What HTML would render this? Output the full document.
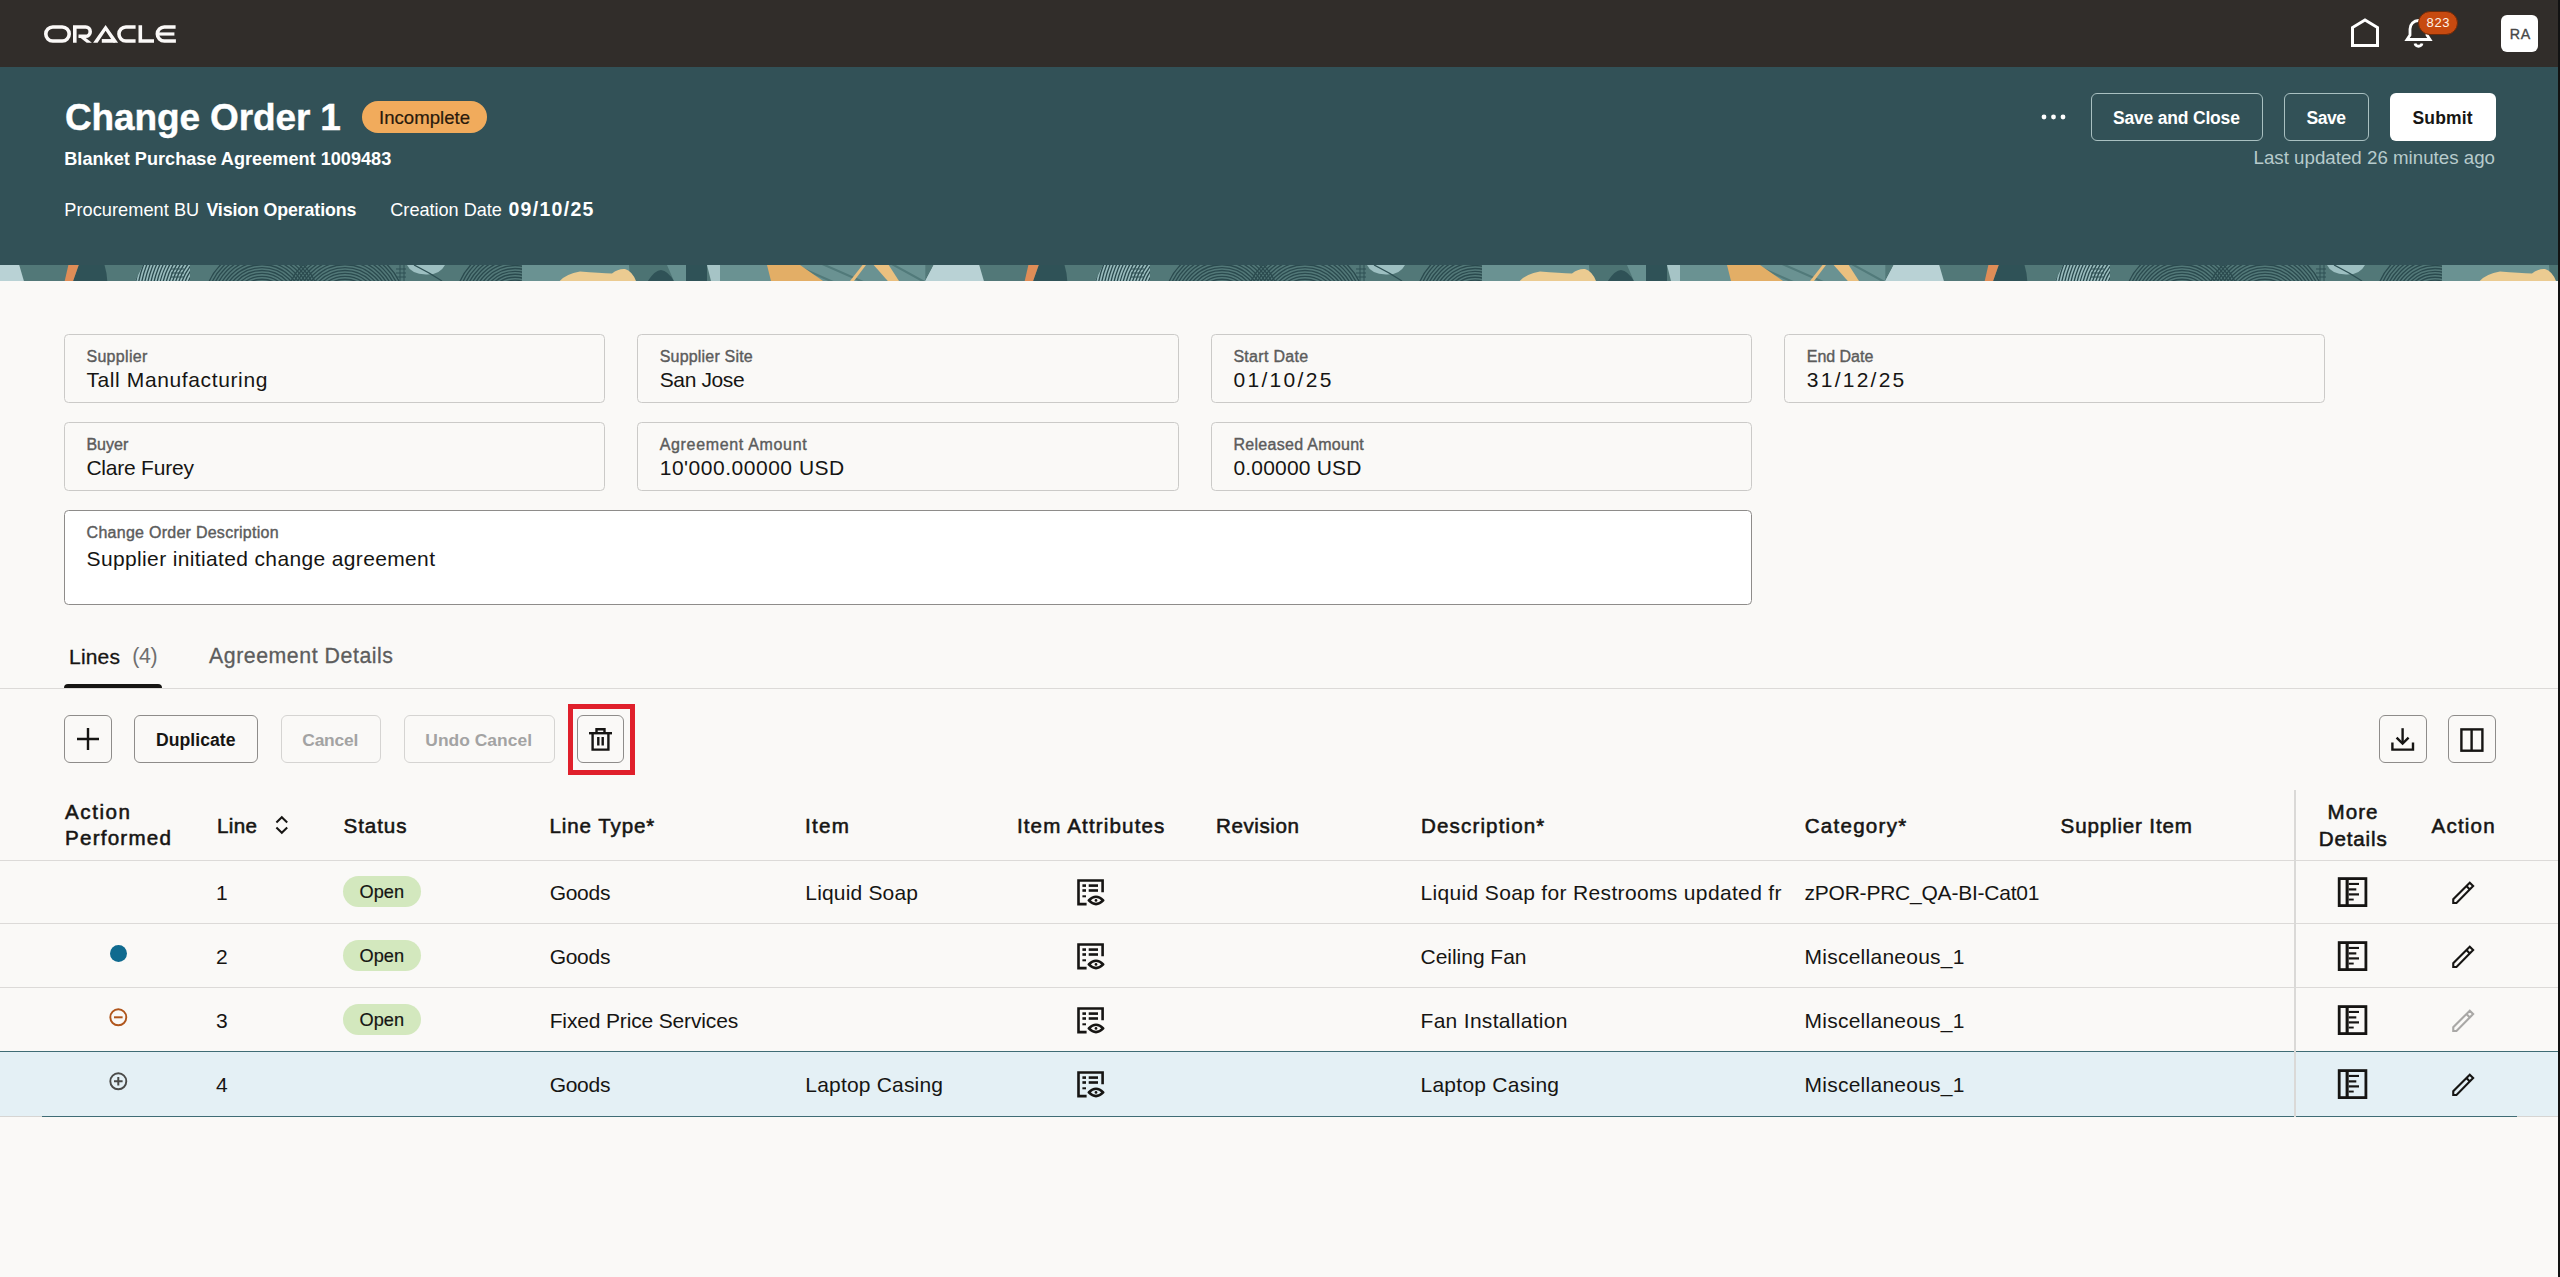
<!DOCTYPE html>
<html><head><meta charset="utf-8"><title>Change Order 1</title>
<style>
html,body{margin:0;padding:0;}
body{width:2560px;height:1277px;overflow:hidden;position:relative;background:#FAF9F7;font-family:"Liberation Sans",sans-serif;}
.t{position:absolute;white-space:nowrap;line-height:0;}
.a{position:absolute;box-sizing:border-box;}
svg{position:absolute;overflow:visible;}

</style></head>
<body>
<!-- top bar -->
<div class="a" style="left:0;top:0;width:2560px;height:67px;background:#312D2A"></div>
<svg style="left:44px;top:25.3px" width="132" height="18" viewBox="0 0 132 17.5">
 <g fill="none" stroke="#FBF9F8" stroke-width="3.6">
  <rect x="1.8" y="1.8" width="23.4" height="13.9" rx="6.95"/>
  <path d="M30.8,17.5 V1.8 H41.6 A4.6,4.6 0 0 1 41.6,11 H34.5"/>
  <polygon points="34.4,11 39.6,11 47.9,17.5 42.7,17.5" fill="#FBF9F8" stroke="none"/>
  <polygon points="49.1,17.5 61.6,-0.3 74.1,17.5 69.6,17.5 61.6,5.6 53.6,17.5" fill="#FBF9F8" stroke="none"/>
  <rect x="57.8" y="13.8" width="13" height="3.7" fill="#FBF9F8" stroke="none"/>
  <path d="M91.6,1.8 H81.9 A6.95,6.95 0 0 0 81.9,15.7 H91.6"/>
  <path d="M96.3,0 V15.7 H110"/>
  <path d="M131.6,1.8 H120.3 A6.95,6.95 0 0 0 120.3,15.7 H131.9"/>
  <path d="M113,8.75 H130.4" stroke-width="3.2"/>
 </g>
</svg>
<!-- home -->
<svg style="left:2350px;top:18px" width="32" height="30" viewBox="0 0 32 30">
 <path d="M2.5,27.5 V9.5 L15,2 L27.5,9.5 V27.5 Z" fill="none" stroke="#fff" stroke-width="3" stroke-linejoin="miter"/>
</svg>
<!-- bell -->
<svg style="left:2404px;top:17px" width="30" height="32" viewBox="0 0 30 32">
 <path d="M3,22.5 H26 L23,18 V12 A8.5,8.5 0 0 0 6,12 V18 Z" fill="none" stroke="#fff" stroke-width="2.8" stroke-linejoin="miter"/>
 <path d="M11,26.5 A3.6,3.6 0 0 0 18,26.5" fill="none" stroke="#fff" stroke-width="2.8"/>
</svg>
<div class="a" style="left:2418px;top:10.8px;width:40px;height:24.7px;border-radius:13px;background:#C74A10;border:1px solid #6b2a0a"></div>
<div class="a" style="left:2501px;top:14.8px;width:37px;height:37.3px;border-radius:6px;background:#fff"></div>

<!-- teal header -->
<div class="a" style="left:0;top:67px;width:2560px;height:198px;background:#325157"></div>
<!-- band -->
<svg style="left:0;top:265px" width="2560" height="16" viewBox="0 0 2560 16">
 <defs>
  <clipPath id="cA"><polygon points="143,0 190,0 190,16 135,16"/></clipPath>
  <clipPath id="cB"><rect x="190" y="0" width="217" height="16"/></clipPath>
  <clipPath id="cC"><rect x="445" y="0" width="78" height="16"/></clipPath>
  <pattern id="band" x="0" y="0" width="960" height="16" patternUnits="userSpaceOnUse">
   <rect x="0" y="0" width="960" height="16" fill="#527878"/>
   <polygon points="-40,0 19.2,0 23.9,16 -40,16" fill="#B9D2D5"/>
   <polygon points="925.3,16 933.7,0 1000,0 1000,16" fill="#B9D2D5"/>
   <path d="M78.7,0 H104.5 Q107,8 107.3,16 H73 Z" fill="#2F5257"/>
   <polygon points="68.4,0 78.7,0 73.1,16 64.7,16" fill="#DF8D57"/>
   <polygon points="143.4,0 190,0 190,16 135,16" fill="#98BBBD"/>
   <g clip-path="url(#cA)"><g fill="none" stroke="#2A4A4E" stroke-width="1.35"><circle cx="235" cy="35" r="50.0"/><circle cx="235" cy="35" r="53.0"/><circle cx="235" cy="35" r="56.0"/><circle cx="235" cy="35" r="59.0"/><circle cx="235" cy="35" r="62.0"/><circle cx="235" cy="35" r="65.0"/><circle cx="235" cy="35" r="68.0"/><circle cx="235" cy="35" r="71.0"/><circle cx="235" cy="35" r="74.0"/><circle cx="235" cy="35" r="77.0"/><circle cx="235" cy="35" r="80.0"/><circle cx="235" cy="35" r="83.0"/><circle cx="235" cy="35" r="86.0"/><circle cx="235" cy="35" r="89.0"/><circle cx="235" cy="35" r="92.0"/><circle cx="235" cy="35" r="95.0"/><circle cx="235" cy="35" r="98.0"/><circle cx="235" cy="35" r="101.0"/><circle cx="235" cy="35" r="104.0"/><circle cx="235" cy="35" r="107.0"/><circle cx="235" cy="35" r="110.0"/></g>
    <g stroke="#2D4F53" stroke-width="1"><path d="M171,4 H184 M171,8 H184 M171,12 H184"/></g></g>
   <g clip-path="url(#cB)"><g fill="none" stroke="#2A4A4E" stroke-width="1.35"><circle cx="262" cy="40" r="20.0"/><circle cx="262" cy="40" r="22.9"/><circle cx="262" cy="40" r="25.8"/><circle cx="262" cy="40" r="28.7"/><circle cx="262" cy="40" r="31.6"/><circle cx="262" cy="40" r="34.5"/><circle cx="262" cy="40" r="37.4"/><circle cx="262" cy="40" r="40.3"/><circle cx="262" cy="40" r="43.2"/><circle cx="262" cy="40" r="46.1"/><circle cx="262" cy="40" r="49.0"/><circle cx="262" cy="40" r="51.9"/><circle cx="262" cy="40" r="54.8"/><circle cx="262" cy="40" r="57.7"/></g><g fill="none" stroke="#2A4A4E" stroke-width="1.35"><circle cx="345" cy="42" r="22.0"/><circle cx="345" cy="42" r="24.9"/><circle cx="345" cy="42" r="27.8"/><circle cx="345" cy="42" r="30.7"/><circle cx="345" cy="42" r="33.6"/><circle cx="345" cy="42" r="36.5"/><circle cx="345" cy="42" r="39.4"/><circle cx="345" cy="42" r="42.3"/><circle cx="345" cy="42" r="45.2"/><circle cx="345" cy="42" r="48.1"/><circle cx="345" cy="42" r="51.0"/><circle cx="345" cy="42" r="53.9"/><circle cx="345" cy="42" r="56.8"/><circle cx="345" cy="42" r="59.7"/></g>
    <g stroke="#2D4F53" stroke-width="1"><path d="M396,4 H406 M396,8 H406 M396,12 H406 M400,0 V16 M404,0 V16"/></g></g>
   <path d="M407,0 H445 Q440,10 426,9.5 Q411,9 407,0 Z" fill="#9DBFC1"/>
   <path d="M414,0 Q430,8 442,16" fill="none" stroke="#2D4F53" stroke-width="1.3"/>
   <g clip-path="url(#cC)"><g fill="none" stroke="#2A4A4E" stroke-width="1.35"><circle cx="515" cy="40" r="22.0"/><circle cx="515" cy="40" r="24.9"/><circle cx="515" cy="40" r="27.8"/><circle cx="515" cy="40" r="30.7"/><circle cx="515" cy="40" r="33.6"/><circle cx="515" cy="40" r="36.5"/><circle cx="515" cy="40" r="39.4"/><circle cx="515" cy="40" r="42.3"/><circle cx="515" cy="40" r="45.2"/><circle cx="515" cy="40" r="48.1"/><circle cx="515" cy="40" r="51.0"/><circle cx="515" cy="40" r="53.9"/><circle cx="515" cy="40" r="56.8"/><circle cx="515" cy="40" r="59.7"/></g></g>
   <rect x="522" y="0" width="108" height="16" fill="#6A9292"/>
   <path d="M629,0 H707 L707,16 H630 Z" fill="#4C7373"/>
   <path d="M559.7,16 Q566,9 580,6.5 Q600,8 612,8.5 Q618,3.5 625,4 Q632,6 636,16 Z" fill="#EBCB91"/>
   <path d="M647.8,16 Q655,5 661,5 Q668,6 674,16 Z" fill="#2F5257"/>
   <polygon points="667,0 686,0 686,16 674,16" fill="#6E9797" opacity="0.8"/>
   <rect x="686" y="0" width="21" height="16" fill="#2F5257"/>
   <polygon points="707,0 720,0 724,16 711,16" fill="#A6C4C6"/>
   <rect x="720" y="0" width="205.3" height="16" fill="#6A9292"/>
   <polygon points="925.3,16 933.7,0 940,0 940,16" fill="#B9D2D5"/>
   <g stroke="#517A7A" stroke-width="2.2"><path d="M790,-2 L840,20 M820,-2 L870,20 M890,-2 L930,20"/></g>
   <polygon points="767,0 800,0 823,16 771,16" fill="#E3AE66"/>
   <polygon points="862.5,0 866,0 854,16 850,16" fill="#E8BE7E"/>
   <polygon points="873.7,0 888.7,0 899,16 887.8,16" fill="#EBC07F"/>
  </pattern>
 </defs>
 <rect x="0" y="0" width="2560" height="16" fill="url(#band)"/>
</svg>

<!-- header buttons -->
<svg style="left:2040px;top:112px" width="28" height="10" viewBox="0 0 28 10">
 <circle cx="4" cy="5" r="2.4" fill="#fff"/><circle cx="13.5" cy="5" r="2.4" fill="#fff"/><circle cx="23" cy="5" r="2.4" fill="#fff"/>
</svg>
<div class="a" style="left:2091px;top:93px;width:172px;height:48px;border:1.3px solid #A9C0C1;border-radius:6px"></div>
<div class="a" style="left:2284px;top:93px;width:85px;height:48px;border:1.3px solid #A9C0C1;border-radius:6px"></div>
<div class="a" style="left:2390px;top:93px;width:106px;height:48px;background:#fff;border-radius:6px"></div>
<div class="a" style="left:362px;top:101px;width:125px;height:32px;background:#F1AB5C;border-radius:16px"></div>

<!-- form fields -->
<div class="a" style="left:64px;top:334.2px;width:541px;height:68.5px;border:1.3px solid #CBCAC8;border-radius:4.5px"></div>
<div class="a" style="left:637.3px;top:334.2px;width:541.5px;height:68.5px;border:1.3px solid #CBCAC8;border-radius:4.5px"></div>
<div class="a" style="left:1211px;top:334.2px;width:541px;height:68.5px;border:1.3px solid #CBCAC8;border-radius:4.5px"></div>
<div class="a" style="left:1784.4px;top:334.2px;width:540.5px;height:68.5px;border:1.3px solid #CBCAC8;border-radius:4.5px"></div>
<div class="a" style="left:64px;top:422.2px;width:541px;height:68.5px;border:1.3px solid #CBCAC8;border-radius:4.5px"></div>
<div class="a" style="left:637.3px;top:422.2px;width:541.5px;height:68.5px;border:1.3px solid #CBCAC8;border-radius:4.5px"></div>
<div class="a" style="left:1211px;top:422.2px;width:541px;height:68.5px;border:1.3px solid #CBCAC8;border-radius:4.5px"></div>
<div class="a" style="left:64px;top:510.3px;width:1688px;height:94.5px;border:1.3px solid #8E8C8A;border-radius:4.5px;background:#fff"></div>

<!-- tabs -->
<div class="a" style="left:64px;top:684px;width:98px;height:4.5px;background:#161513;border-radius:4px 4px 0 0"></div>
<div class="a" style="left:0;top:688px;width:2560px;height:1.3px;background:#DCDAD8"></div>

<!-- toolbar -->
<div class="a" style="left:64px;top:715px;width:48px;height:48px;border:1.3px solid #8E8C8A;border-radius:6px"></div>
<svg style="left:77px;top:728px" width="22" height="22" viewBox="0 0 22 22"><path d="M11,0 V22 M0,11 H22" stroke="#161513" stroke-width="2.4"/></svg>
<div class="a" style="left:133.5px;top:715px;width:124.5px;height:48px;border:1.3px solid #8E8C8A;border-radius:6px"></div>
<div class="a" style="left:280.5px;top:715px;width:100.5px;height:48px;border:1.3px solid #D5D4D2;border-radius:6px"></div>
<div class="a" style="left:403.5px;top:715px;width:151.5px;height:48px;border:1.3px solid #D5D4D2;border-radius:6px"></div>
<div class="a" style="left:576.5px;top:715px;width:47.5px;height:48px;border:1.3px solid #8E8C8A;border-radius:6px"></div>
<svg style="left:589px;top:728px" width="23" height="23" viewBox="0 0 23 23">
 <g fill="none" stroke="#161513" stroke-width="2.4">
  <path d="M0,5.2 H23"/><path d="M7.5,5.2 V1.2 H15.5 V5.2"/><path d="M3.6,5.2 V21.6 H19.4 V5.2"/><path d="M9.3,9 V17.5 M13.7,9 V17.5"/>
 </g>
</svg>
<div class="a" style="left:568.3px;top:704px;width:66.7px;height:70.5px;border:5px solid #E0202B"></div>

<div class="a" style="left:2379px;top:715px;width:48px;height:48px;border:1.3px solid #8E8C8A;border-radius:6px"></div>
<svg style="left:2390px;top:727px" width="26" height="26" viewBox="0 0 26 26">
 <g fill="none" stroke="#161513" stroke-width="2.4">
  <path d="M12.6,1.2 V16"/><path d="M6.6,10.6 L12.6,16.6 L18.6,10.6"/><path d="M2.4,15.5 V22.6 H23 V15.5"/>
 </g>
</svg>
<div class="a" style="left:2448px;top:715px;width:48px;height:48px;border:1.3px solid #8E8C8A;border-radius:6px"></div>
<svg style="left:2459px;top:727px" width="26" height="26" viewBox="0 0 26 26">
 <g fill="none" stroke="#161513" stroke-width="2.4"><rect x="2.4" y="2.4" width="21" height="21.3"/><path d="M12.6,2.4 V23.7"/></g>
</svg>

<!-- table -->
<div class="a" style="left:0;top:860px;width:2560px;height:1.3px;background:#DCDAD8"></div>
<div class="a" style="left:0;top:923px;width:2560px;height:1.3px;background:#DCDAD8"></div>
<div class="a" style="left:0;top:987px;width:2560px;height:1.3px;background:#DCDAD8"></div>
<div class="a" style="left:0;top:1051.5px;width:2560px;height:65.5px;background:#E4F0F5"></div>
<div class="a" style="left:0;top:1051px;width:2560px;height:1.2px;background:#3F6C75"></div>
<div class="a" style="left:0;top:1116px;width:2560px;height:1.3px;background:#D6D5D3"></div>
<div class="a" style="left:42px;top:1116px;width:2475px;height:1.2px;background:#3F6C75"></div>
<div class="a" style="left:2293.5px;top:790px;width:2px;height:327px;background:#DAD9D7"></div>
<!-- sort icon -->
<svg style="left:275px;top:816px" width="14" height="18" viewBox="0 0 14 18">
 <g fill="none" stroke="#161513" stroke-width="2"><path d="M1.4,6.5 L6.8,1.2 L12.2,6.5"/><path d="M1.4,11.5 L6.8,16.8 L12.2,11.5"/></g>
</svg>

<div class='a' style='left:343px;top:876px;width:78px;height:31.3px;border-radius:16px;background:#D3E8BE'></div>
<svg style='left:1076px;top:877.5px' width='30' height='30' viewBox='0 0 30 30'>
 <g fill='none' stroke='#161513' stroke-width='2.6'>
  <path d='M10.6,26.1 H2.5 V2.5 H26.6 V14.3'/>
 </g>
 <g fill='#161513'>
  <rect x='6.4' y='6.3' width='3.6' height='2.6'/><rect x='12.7' y='6.3' width='9.3' height='2.6'/>
  <rect x='6.4' y='11.2' width='3.6' height='2.6'/><rect x='12.7' y='11.2' width='9.3' height='2.6'/>
  <rect x='6.4' y='17.3' width='3.6' height='2'/>
 </g>
 <path d='M12.8,22.45 Q20,15.1 27.2,22.45 Q20,29.8 12.8,22.45 Z' fill='none' stroke='#161513' stroke-width='2.6' stroke-linejoin='round'/>
 <circle cx='20' cy='22.4' r='1.35' fill='#161513'/>
</svg>
<svg style='left:2336px;top:876px' width='32' height='32' viewBox='0 0 32 32'>
 <rect x='3.2' y='2.6' width='26.7' height='27' fill='none' stroke='#161513' stroke-width='2.8'/>
 <rect x='9.6' y='2.6' width='3.1' height='27' fill='#161513'/>
 <rect x='12.7' y='6.9' width='10.3' height='2.1' fill='#161513'/>
 <rect x='12.7' y='12.3' width='7.6' height='2.2' fill='#161513'/>
 <rect x='12.7' y='17.3' width='10.3' height='2.2' fill='#161513'/>
 <rect x='12.7' y='22.6' width='5' height='1.9' fill='#161513'/>
</svg>
<svg style='left:2450px;top:879px' width='28' height='28' viewBox='0 0 28 28'>
 <g fill='none' stroke='#161513' stroke-width='2.1' stroke-linejoin='miter'>
  <path d='M3.25,23.95 V20.23 L19.76,3.72 L23.14,7.1 L6.48,23.95 Z'/>
  <path d='M16.4,7.1 L19.9,10.6'/>
 </g>
</svg>
<div class='a' style='left:343px;top:940px;width:78px;height:31.3px;border-radius:16px;background:#D3E8BE'></div>
<svg style='left:1076px;top:941.5px' width='30' height='30' viewBox='0 0 30 30'>
 <g fill='none' stroke='#161513' stroke-width='2.6'>
  <path d='M10.6,26.1 H2.5 V2.5 H26.6 V14.3'/>
 </g>
 <g fill='#161513'>
  <rect x='6.4' y='6.3' width='3.6' height='2.6'/><rect x='12.7' y='6.3' width='9.3' height='2.6'/>
  <rect x='6.4' y='11.2' width='3.6' height='2.6'/><rect x='12.7' y='11.2' width='9.3' height='2.6'/>
  <rect x='6.4' y='17.3' width='3.6' height='2'/>
 </g>
 <path d='M12.8,22.45 Q20,15.1 27.2,22.45 Q20,29.8 12.8,22.45 Z' fill='none' stroke='#161513' stroke-width='2.6' stroke-linejoin='round'/>
 <circle cx='20' cy='22.4' r='1.35' fill='#161513'/>
</svg>
<svg style='left:2336px;top:940px' width='32' height='32' viewBox='0 0 32 32'>
 <rect x='3.2' y='2.6' width='26.7' height='27' fill='none' stroke='#161513' stroke-width='2.8'/>
 <rect x='9.6' y='2.6' width='3.1' height='27' fill='#161513'/>
 <rect x='12.7' y='6.9' width='10.3' height='2.1' fill='#161513'/>
 <rect x='12.7' y='12.3' width='7.6' height='2.2' fill='#161513'/>
 <rect x='12.7' y='17.3' width='10.3' height='2.2' fill='#161513'/>
 <rect x='12.7' y='22.6' width='5' height='1.9' fill='#161513'/>
</svg>
<svg style='left:2450px;top:943px' width='28' height='28' viewBox='0 0 28 28'>
 <g fill='none' stroke='#161513' stroke-width='2.1' stroke-linejoin='miter'>
  <path d='M3.25,23.95 V20.23 L19.76,3.72 L23.14,7.1 L6.48,23.95 Z'/>
  <path d='M16.4,7.1 L19.9,10.6'/>
 </g>
</svg>
<div class='a' style='left:343px;top:1004px;width:78px;height:31.3px;border-radius:16px;background:#D3E8BE'></div>
<svg style='left:1076px;top:1005.5px' width='30' height='30' viewBox='0 0 30 30'>
 <g fill='none' stroke='#161513' stroke-width='2.6'>
  <path d='M10.6,26.1 H2.5 V2.5 H26.6 V14.3'/>
 </g>
 <g fill='#161513'>
  <rect x='6.4' y='6.3' width='3.6' height='2.6'/><rect x='12.7' y='6.3' width='9.3' height='2.6'/>
  <rect x='6.4' y='11.2' width='3.6' height='2.6'/><rect x='12.7' y='11.2' width='9.3' height='2.6'/>
  <rect x='6.4' y='17.3' width='3.6' height='2'/>
 </g>
 <path d='M12.8,22.45 Q20,15.1 27.2,22.45 Q20,29.8 12.8,22.45 Z' fill='none' stroke='#161513' stroke-width='2.6' stroke-linejoin='round'/>
 <circle cx='20' cy='22.4' r='1.35' fill='#161513'/>
</svg>
<svg style='left:2336px;top:1004px' width='32' height='32' viewBox='0 0 32 32'>
 <rect x='3.2' y='2.6' width='26.7' height='27' fill='none' stroke='#161513' stroke-width='2.8'/>
 <rect x='9.6' y='2.6' width='3.1' height='27' fill='#161513'/>
 <rect x='12.7' y='6.9' width='10.3' height='2.1' fill='#161513'/>
 <rect x='12.7' y='12.3' width='7.6' height='2.2' fill='#161513'/>
 <rect x='12.7' y='17.3' width='10.3' height='2.2' fill='#161513'/>
 <rect x='12.7' y='22.6' width='5' height='1.9' fill='#161513'/>
</svg>
<svg style='left:2450px;top:1007px' width='28' height='28' viewBox='0 0 28 28'>
 <g fill='none' stroke='#A9A8A6' stroke-width='2.1' stroke-linejoin='miter'>
  <path d='M3.25,23.95 V20.23 L19.76,3.72 L23.14,7.1 L6.48,23.95 Z'/>
  <path d='M16.4,7.1 L19.9,10.6'/>
 </g>
</svg>
<svg style='left:1076px;top:1069.5px' width='30' height='30' viewBox='0 0 30 30'>
 <g fill='none' stroke='#161513' stroke-width='2.6'>
  <path d='M10.6,26.1 H2.5 V2.5 H26.6 V14.3'/>
 </g>
 <g fill='#161513'>
  <rect x='6.4' y='6.3' width='3.6' height='2.6'/><rect x='12.7' y='6.3' width='9.3' height='2.6'/>
  <rect x='6.4' y='11.2' width='3.6' height='2.6'/><rect x='12.7' y='11.2' width='9.3' height='2.6'/>
  <rect x='6.4' y='17.3' width='3.6' height='2'/>
 </g>
 <path d='M12.8,22.45 Q20,15.1 27.2,22.45 Q20,29.8 12.8,22.45 Z' fill='none' stroke='#161513' stroke-width='2.6' stroke-linejoin='round'/>
 <circle cx='20' cy='22.4' r='1.35' fill='#161513'/>
</svg>
<svg style='left:2336px;top:1068px' width='32' height='32' viewBox='0 0 32 32'>
 <rect x='3.2' y='2.6' width='26.7' height='27' fill='none' stroke='#161513' stroke-width='2.8'/>
 <rect x='9.6' y='2.6' width='3.1' height='27' fill='#161513'/>
 <rect x='12.7' y='6.9' width='10.3' height='2.1' fill='#161513'/>
 <rect x='12.7' y='12.3' width='7.6' height='2.2' fill='#161513'/>
 <rect x='12.7' y='17.3' width='10.3' height='2.2' fill='#161513'/>
 <rect x='12.7' y='22.6' width='5' height='1.9' fill='#161513'/>
</svg>
<svg style='left:2450px;top:1071px' width='28' height='28' viewBox='0 0 28 28'>
 <g fill='none' stroke='#161513' stroke-width='2.1' stroke-linejoin='miter'>
  <path d='M3.25,23.95 V20.23 L19.76,3.72 L23.14,7.1 L6.48,23.95 Z'/>
  <path d='M16.4,7.1 L19.9,10.6'/>
 </g>
</svg>
<div class='a' style='left:109.6px;top:944.6px;width:17.5px;height:17.5px;border-radius:50%;background:#0F6A8F'></div>
<svg style='left:108px;top:1007px' width='21' height='21' viewBox='0 0 21 21'>
 <circle cx='10.3' cy='10.3' r='8' fill='none' stroke='#B0561C' stroke-width='1.9'/><path d='M6,10.3 H14.6' stroke='#B0561C' stroke-width='2'/></svg>
<svg style='left:108px;top:1071px' width='21' height='21' viewBox='0 0 21 21'>
 <circle cx='10.3' cy='10.3' r='8' fill='none' stroke='#4A4A48' stroke-width='1.9'/><path d='M6,10.3 H14.6 M10.3,6 V14.6' stroke='#4A4A48' stroke-width='2'/></svg>
<div class='a' style='left:2558.4px;top:0;width:1.6px;height:1277px;background:#121212'></div>
<div class='t' style='left:64.90px;top:118.48px;font-size:37px;font-weight:700;color:#ffffff;letter-spacing:-0.121px;-webkit-text-stroke:0.4px #fff'>Change Order 1</div>
<div class='t' style='left:379.00px;top:117.96px;font-size:18.6px;font-weight:400;color:#2a1a0c;letter-spacing:0.003px;-webkit-text-stroke:0.2px #2a1a0c'>Incomplete</div>
<div class='t' style='left:64.25px;top:158.83px;font-size:18.1px;font-weight:700;color:#ffffff;letter-spacing:0.024px;'>Blanket Purchase Agreement 1009483</div>
<div class='t' style='left:64.25px;top:209.99px;font-size:18.2px;font-weight:400;color:#ffffff;letter-spacing:0.043px;'>Procurement BU</div>
<div class='t' style='left:206.40px;top:210.13px;font-size:17.8px;font-weight:700;color:#ffffff;letter-spacing:-0.115px;'>Vision Operations</div>
<div class='t' style='left:390.30px;top:209.53px;font-size:18.1px;font-weight:400;color:#ffffff;letter-spacing:-0.003px;'>Creation Date</div>
<div class='t' style='left:508.40px;top:209.04px;font-size:19.5px;font-weight:700;color:#ffffff;letter-spacing:1.299px;'>09/10/25</div>
<div class='t' style='left:2112.90px;top:118.34px;font-size:17.5px;font-weight:700;color:#ffffff;letter-spacing:-0.183px;'>Save and Close</div>
<div class='t' style='left:2306.60px;top:118.34px;font-size:17.5px;font-weight:700;color:#ffffff;letter-spacing:-0.458px;'>Save</div>
<div class='t' style='left:2412.50px;top:118.34px;font-size:17.5px;font-weight:700;color:#161513;letter-spacing:0.138px;'>Submit</div>
<div class='t' style='left:2253.50px;top:158.22px;font-size:18.7px;font-weight:400;color:#b7cbcc;letter-spacing:0.017px;'>Last updated 26 minutes ago</div>
<div class='t' style='left:2426.60px;top:22.70px;font-size:13px;font-weight:400;color:#fff3ea;letter-spacing:0.648px;'>823</div>
<div class='t' style='left:2509.70px;top:34.28px;font-size:14.2px;font-weight:400;color:#474747;letter-spacing:0.781px;-webkit-text-stroke:0.35px #474747'>RA</div>
<div class='t' style='left:86.40px;top:356.66px;font-size:16px;font-weight:400;color:#5c5c5c;letter-spacing:0.328px;-webkit-text-stroke:0.4px #5c5c5c'>Supplier</div>
<div class='t' style='left:86.40px;top:379.72px;font-size:21px;font-weight:400;color:#161513;letter-spacing:0.622px;'>Tall Manufacturing</div>
<div class='t' style='left:659.70px;top:356.66px;font-size:16px;font-weight:400;color:#5c5c5c;letter-spacing:0.190px;-webkit-text-stroke:0.4px #5c5c5c'>Supplier Site</div>
<div class='t' style='left:659.70px;top:379.72px;font-size:21px;font-weight:400;color:#161513;letter-spacing:-0.366px;'>San Jose</div>
<div class='t' style='left:1233.40px;top:356.66px;font-size:16px;font-weight:400;color:#5c5c5c;letter-spacing:0.297px;-webkit-text-stroke:0.4px #5c5c5c'>Start Date</div>
<div class='t' style='left:1233.40px;top:379.72px;font-size:21px;font-weight:400;color:#161513;letter-spacing:2.321px;'>01/10/25</div>
<div class='t' style='left:1806.80px;top:356.66px;font-size:16px;font-weight:400;color:#5c5c5c;letter-spacing:-0.031px;-webkit-text-stroke:0.4px #5c5c5c'>End Date</div>
<div class='t' style='left:1806.80px;top:379.72px;font-size:21px;font-weight:400;color:#161513;letter-spacing:2.250px;'>31/12/25</div>
<div class='t' style='left:86.40px;top:444.66px;font-size:16px;font-weight:400;color:#5c5c5c;letter-spacing:0.051px;-webkit-text-stroke:0.4px #5c5c5c'>Buyer</div>
<div class='t' style='left:86.40px;top:467.52px;font-size:21px;font-weight:400;color:#161513;letter-spacing:-0.220px;'>Clare Furey</div>
<div class='t' style='left:659.70px;top:444.66px;font-size:16px;font-weight:400;color:#5c5c5c;letter-spacing:0.669px;-webkit-text-stroke:0.4px #5c5c5c'>Agreement Amount</div>
<div class='t' style='left:659.70px;top:467.52px;font-size:21px;font-weight:400;color:#161513;letter-spacing:0.519px;'>10&#x27;000.00000 USD</div>
<div class='t' style='left:1233.40px;top:444.66px;font-size:16px;font-weight:400;color:#5c5c5c;letter-spacing:0.292px;-webkit-text-stroke:0.4px #5c5c5c'>Released Amount</div>
<div class='t' style='left:1233.40px;top:467.52px;font-size:21px;font-weight:400;color:#161513;letter-spacing:0.191px;'>0.00000 USD</div>
<div class='t' style='left:86.60px;top:532.76px;font-size:16px;font-weight:400;color:#5c5c5c;letter-spacing:0.266px;-webkit-text-stroke:0.4px #5c5c5c'>Change Order Description</div>
<div class='t' style='left:86.60px;top:558.92px;font-size:21px;font-weight:400;color:#161513;letter-spacing:0.358px;'>Supplier initiated change agreement</div>
<div class='t' style='left:69.00px;top:656.52px;font-size:21px;font-weight:400;color:#161513;letter-spacing:0.199px;-webkit-text-stroke:0.3px #161513'>Lines</div>
<div class='t' style='left:132.30px;top:656.42px;font-size:21.3px;font-weight:400;color:#6f6f6f;letter-spacing:-0.366px;'>(4)</div>
<div class='t' style='left:209.00px;top:656.42px;font-size:21.3px;font-weight:400;color:#5d5d5d;letter-spacing:0.550px;-webkit-text-stroke:0.3px #5d5d5d'>Agreement Details</div>
<div class='t' style='left:156.00px;top:739.60px;font-size:17.6px;font-weight:700;color:#161513;letter-spacing:0.037px;'>Duplicate</div>
<div class='t' style='left:302.30px;top:739.67px;font-size:17.4px;font-weight:700;color:#a3a3a3;letter-spacing:-0.206px;'>Cancel</div>
<div class='t' style='left:425.30px;top:739.67px;font-size:17.4px;font-weight:700;color:#a3a3a3;letter-spacing:0.040px;'>Undo Cancel</div>
<div class='t' style='left:65.00px;top:811.66px;font-size:20.6px;font-weight:400;color:#161513;letter-spacing:1.550px;-webkit-text-stroke:0.55px #161513'>Action</div>
<div class='t' style='left:65.00px;top:838.46px;font-size:20.6px;font-weight:400;color:#161513;letter-spacing:1.230px;-webkit-text-stroke:0.55px #161513'>Performed</div>
<div class='t' style='left:217.00px;top:825.66px;font-size:20.6px;font-weight:400;color:#161513;letter-spacing:0.354px;-webkit-text-stroke:0.55px #161513'>Line</div>
<div class='t' style='left:343.50px;top:825.66px;font-size:20.6px;font-weight:400;color:#161513;letter-spacing:0.922px;-webkit-text-stroke:0.55px #161513'>Status</div>
<div class='t' style='left:549.40px;top:825.66px;font-size:20.6px;font-weight:400;color:#161513;letter-spacing:0.894px;-webkit-text-stroke:0.55px #161513'>Line Type*</div>
<div class='t' style='left:805.00px;top:825.66px;font-size:20.6px;font-weight:400;color:#161513;letter-spacing:1.312px;-webkit-text-stroke:0.55px #161513'>Item</div>
<div class='t' style='left:1016.90px;top:825.66px;font-size:20.6px;font-weight:400;color:#161513;letter-spacing:1.133px;-webkit-text-stroke:0.55px #161513'>Item Attributes</div>
<div class='t' style='left:1216.00px;top:825.66px;font-size:20.6px;font-weight:400;color:#161513;letter-spacing:0.574px;-webkit-text-stroke:0.55px #161513'>Revision</div>
<div class='t' style='left:1421.00px;top:825.66px;font-size:20.6px;font-weight:400;color:#161513;letter-spacing:1.124px;-webkit-text-stroke:0.55px #161513'>Description*</div>
<div class='t' style='left:1804.70px;top:825.66px;font-size:20.6px;font-weight:400;color:#161513;letter-spacing:1.240px;-webkit-text-stroke:0.55px #161513'>Category*</div>
<div class='t' style='left:2060.60px;top:825.66px;font-size:20.6px;font-weight:400;color:#161513;letter-spacing:0.830px;-webkit-text-stroke:0.55px #161513'>Supplier Item</div>
<div class='t' style='left:2327.50px;top:812.36px;font-size:20.6px;font-weight:400;color:#161513;letter-spacing:1.026px;-webkit-text-stroke:0.55px #161513'>More</div>
<div class='t' style='left:2318.75px;top:839.06px;font-size:20.6px;font-weight:400;color:#161513;letter-spacing:0.841px;-webkit-text-stroke:0.55px #161513'>Details</div>
<div class='t' style='left:2431.60px;top:825.66px;font-size:20.6px;font-weight:400;color:#161513;letter-spacing:1.150px;-webkit-text-stroke:0.55px #161513'>Action</div>
<div class='t' style='left:216.00px;top:892.52px;font-size:21px;font-weight:400;color:#161513;letter-spacing:0.000px;'>1</div>
<div class='t' style='left:359.50px;top:892.29px;font-size:18.2px;font-weight:400;color:#161513;letter-spacing:0.000px;-webkit-text-stroke:0.2px #161513'>Open</div>
<div class='t' style='left:549.70px;top:892.52px;font-size:21px;font-weight:400;color:#161513;letter-spacing:-0.294px;'>Goods</div>
<div class='t' style='left:805.30px;top:892.52px;font-size:21px;font-weight:400;color:#161513;letter-spacing:0.176px;'>Liquid Soap</div>
<div class='t' style='left:1420.50px;top:892.52px;font-size:21px;font-weight:400;color:#161513;letter-spacing:0.342px;'>Liquid Soap for Restrooms updated fr</div>
<div class='t' style='left:1804.50px;top:892.52px;font-size:21px;font-weight:400;color:#161513;letter-spacing:-0.223px;'>zPOR-PRC_QA-BI-Cat01</div>
<div class='t' style='left:216.00px;top:956.52px;font-size:21px;font-weight:400;color:#161513;letter-spacing:0.000px;'>2</div>
<div class='t' style='left:359.50px;top:956.29px;font-size:18.2px;font-weight:400;color:#161513;letter-spacing:0.000px;-webkit-text-stroke:0.2px #161513'>Open</div>
<div class='t' style='left:549.70px;top:956.52px;font-size:21px;font-weight:400;color:#161513;letter-spacing:-0.294px;'>Goods</div>
<div class='t' style='left:1420.50px;top:956.52px;font-size:21px;font-weight:400;color:#161513;letter-spacing:-0.023px;'>Ceiling Fan</div>
<div class='t' style='left:1804.50px;top:956.52px;font-size:21px;font-weight:400;color:#161513;letter-spacing:0.254px;'>Miscellaneous_1</div>
<div class='t' style='left:216.00px;top:1020.52px;font-size:21px;font-weight:400;color:#161513;letter-spacing:0.000px;'>3</div>
<div class='t' style='left:359.50px;top:1020.29px;font-size:18.2px;font-weight:400;color:#161513;letter-spacing:0.000px;-webkit-text-stroke:0.2px #161513'>Open</div>
<div class='t' style='left:549.70px;top:1020.52px;font-size:21px;font-weight:400;color:#161513;letter-spacing:-0.152px;'>Fixed Price Services</div>
<div class='t' style='left:1420.50px;top:1020.52px;font-size:21px;font-weight:400;color:#161513;letter-spacing:0.305px;'>Fan Installation</div>
<div class='t' style='left:1804.50px;top:1020.52px;font-size:21px;font-weight:400;color:#161513;letter-spacing:0.254px;'>Miscellaneous_1</div>
<div class='t' style='left:216.00px;top:1084.52px;font-size:21px;font-weight:400;color:#161513;letter-spacing:0.000px;'>4</div>
<div class='t' style='left:549.70px;top:1084.52px;font-size:21px;font-weight:400;color:#161513;letter-spacing:-0.294px;'>Goods</div>
<div class='t' style='left:805.30px;top:1084.52px;font-size:21px;font-weight:400;color:#161513;letter-spacing:0.189px;'>Laptop Casing</div>
<div class='t' style='left:1420.50px;top:1084.52px;font-size:21px;font-weight:400;color:#161513;letter-spacing:0.255px;'>Laptop Casing</div>
<div class='t' style='left:1804.50px;top:1084.52px;font-size:21px;font-weight:400;color:#161513;letter-spacing:0.254px;'>Miscellaneous_1</div>
</body></html>
